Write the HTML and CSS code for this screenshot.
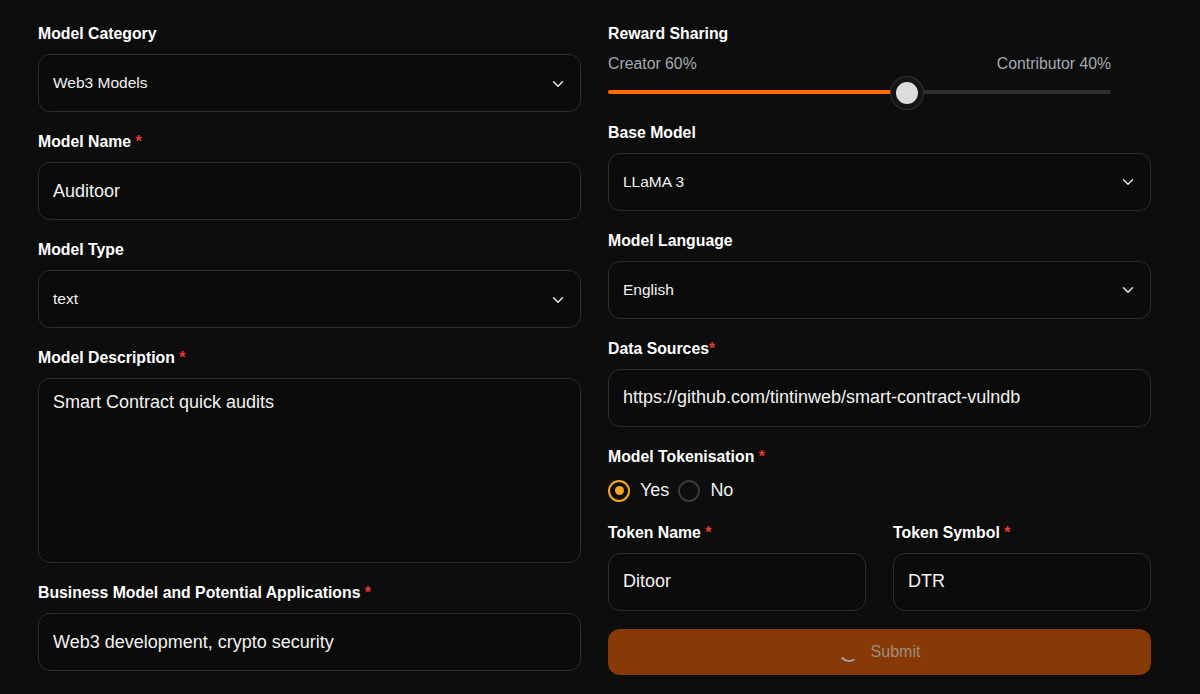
FILE: index.html
```html
<!DOCTYPE html>
<html lang="en">
<head>
<meta charset="utf-8">
<title>Model Form</title>
<link rel="stylesheet" href="styles.css">
</head>
<body>
<form class="form">
  <div class="col">
    <div class="field">
      <div class="label">Model Category</div>
      <div class="box select"><span>Web3 Models</span>
        <svg class="chev" viewBox="0 0 12 8" width="12" height="8"><path d="M1.5 1.8 6 6.2 10.5 1.8" fill="none" stroke="#e8e8e8" stroke-width="1.4" stroke-linecap="round" stroke-linejoin="round"/></svg>
      </div>
    </div>
    <div class="field">
      <div class="label">Model Name <span class="req">*</span></div>
      <div class="box input">Auditoor</div>
    </div>
    <div class="field">
      <div class="label">Model Type</div>
      <div class="box select"><span>text</span>
        <svg class="chev" viewBox="0 0 12 8" width="12" height="8"><path d="M1.5 1.8 6 6.2 10.5 1.8" fill="none" stroke="#e8e8e8" stroke-width="1.4" stroke-linecap="round" stroke-linejoin="round"/></svg>
      </div>
    </div>
    <div class="field">
      <div class="label">Model Description <span class="req">*</span></div>
      <div class="box textarea">Smart Contract quick audits</div>
    </div>
    <div class="field">
      <div class="label">Business Model and Potential Applications <span class="req">*</span></div>
      <div class="box input">Web3 development, crypto security</div>
    </div>
  </div>

  <div class="col">
    <div class="field">
      <div class="label">Reward Sharing</div>
      <div class="share">
        <div class="share-row"><span>Creator 60%</span><span>Contributor 40%</span></div>
        <div class="slider">
          <div class="track"><div class="fill" style="width:59.4%"></div></div>
          <div class="thumb" style="left:59.4%"></div>
        </div>
      </div>
    </div>
    <div class="field">
      <div class="label">Base Model</div>
      <div class="box select"><span>LLaMA 3</span>
        <svg class="chev" viewBox="0 0 12 8" width="12" height="8"><path d="M1.5 1.8 6 6.2 10.5 1.8" fill="none" stroke="#e8e8e8" stroke-width="1.4" stroke-linecap="round" stroke-linejoin="round"/></svg>
      </div>
    </div>
    <div class="field">
      <div class="label">Model Language</div>
      <div class="box select"><span>English</span>
        <svg class="chev" viewBox="0 0 12 8" width="12" height="8"><path d="M1.5 1.8 6 6.2 10.5 1.8" fill="none" stroke="#e8e8e8" stroke-width="1.4" stroke-linecap="round" stroke-linejoin="round"/></svg>
      </div>
    </div>
    <div class="field">
      <div class="label">Data Sources<span class="req">*</span></div>
      <div class="box input">https://github.com/tintinweb/smart-contract-vulndb</div>
    </div>
    <div class="field">
      <div class="label">Model Tokenisation <span class="req">*</span></div>
      <div class="radios">
        <span class="radio on"></span><span class="rlabel">Yes</span>
        <span class="radio"></span><span class="rlabel">No</span>
      </div>
    </div>
    <div class="pair">
      <div class="field">
        <div class="label">Token Name <span class="req">*</span></div>
        <div class="box input">Ditoor</div>
      </div>
      <div class="field">
        <div class="label">Token Symbol <span class="req">*</span></div>
        <div class="box input">DTR</div>
      </div>
    </div>
    <div class="submit"><span class="spinner"></span><span>Submit</span></div>
  </div>
</form>
</body>
</html>
```

FILE: styles.css
```css
* { box-sizing: border-box; }
html, body {
  margin: 0;
  background: #0d0d0d;
  height: 100%;
}
body {
  font-family: "Liberation Sans", Arial, sans-serif;
  color: #f2f2f2;
  overflow: hidden;
}
.form {
  display: grid;
  grid-template-columns: 543px 543px;
  column-gap: 27px;
  padding: 24.4px 38px 0 38px;
}
.col {
  display: flex;
  flex-direction: column;
  gap: 20px;
}
.field {
  display: flex;
  flex-direction: column;
}
.label {
  font-size: 15.8px;
  font-weight: 700;
  line-height: 20px;
  height: 20px;
  color: #ffffff;
  margin-bottom: 10px;
  white-space: nowrap;
}
.req { color: #e53935; }
.box {
  border: 1px solid #2c2c2c;
  border-radius: 12px;
  background: #0b0b0b;
  height: 58px;
  padding: 0 14px;
  display: flex;
  align-items: center;
  color: #f2f2f2;
}
.input { font-size: 18px; }
.select {
  font-size: 15.5px;
  justify-content: space-between;
  padding-right: 16px;
}
.chev { display: block; margin-top: 1px; }
.textarea {
  height: 185px;
  align-items: flex-start;
  padding-top: 13px;
  font-size: 18px;
}
.share-row {
  display: flex;
  justify-content: space-between;
  width: 503px;
  font-size: 15.8px;
  line-height: 20px;
  color: #a3a9b1;
}
.slider {
  position: relative;
  width: 503px;
  height: 28.4px;
}
.track {
  position: absolute;
  left: 0; right: 0;
  top: 16px;
  height: 4px;
  border-radius: 2px;
  background: #2e2e30;
  overflow: hidden;
}
.fill {
  height: 100%;
  background: #ff6a00;
}
.thumb {
  position: absolute;
  top: 2.5px;
  width: 32px;
  height: 32px;
  margin-left: -16px;
  border-radius: 50%;
  background: #dcdcdc;
  border: 5px solid #141414;
  box-shadow: 0 0 0 1px #343434;
}
.radios {
  display: flex;
  align-items: center;
  height: 22px;
  margin-top: 3px;
  font-size: 18px;
}
.radio {
  width: 22px;
  height: 22px;
  border-radius: 50%;
  border: 2px solid #3a3a3c;
  display: inline-flex;
  align-items: center;
  justify-content: center;
}
.radio.on { border-color: #f5a623; }
.radio.on::after {
  content: "";
  width: 9px;
  height: 9px;
  border-radius: 50%;
  background: #f5a623;
}
.rlabel {
  margin: 0 9px 0 10px;
  color: #f2f2f2;
}
.pair {
  display: grid;
  grid-template-columns: 258px 258px;
  column-gap: 27px;
  margin-top: 1px;
}
.submit {
  height: 46px;
  margin-top: -2px;
  border-radius: 12px;
  background: #873a07;
  display: flex;
  align-items: center;
  justify-content: center;
  gap: 12px;
  font-size: 16px;
  color: #a08c7e;
}
.spinner {
  width: 20px;
  height: 20px;
  border-radius: 50%;
  border: 2px solid transparent;
  border-bottom-color: #9ea2a8;
  transform: rotate(8deg);
  margin-top: 0;
}
```
